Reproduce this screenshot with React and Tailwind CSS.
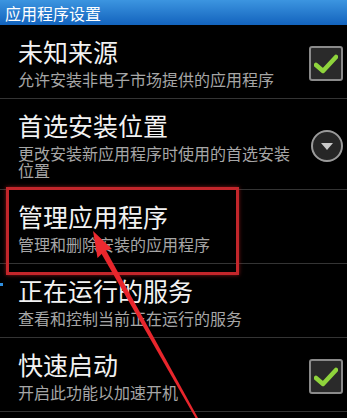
import React from 'react'

const CheckBox = () => (
  <div className="w-[34px] h-[35px] rounded-[3px] border-2 border-[#8a8a8a] bg-[#2a2a2a] flex items-center justify-center">
    <svg width="24" height="20" viewBox="0 0 24 20">
      <path d="M2 11 L9 17 L22 3" fill="none" stroke="#8fd43c" strokeWidth="4.5" strokeLinecap="round" strokeLinejoin="round" />
    </svg>
  </div>
)

const DropDown = () => (
  <div className="w-[32px] h-[32px] rounded-full border-2 border-[#9a9a9a] bg-[#262626] flex items-center justify-center">
    <svg width="14" height="10" viewBox="0 0 14 10">
      <path d="M1 2 L13 2 L7 9 Z" fill="#c8c8c8" />
    </svg>
  </div>
)

const settings = [
  { title: '未知来源', desc: '允许安装非电子市场提供的应用程序', control: 'check' },
  { title: '首选安装位置', desc: '更改安装新应用程序时使用的首选安装位置', control: 'drop' },
  { title: '管理应用程序', desc: '管理和删除安装的应用程序' },
  { title: '正在运行的服务', desc: '查看和控制当前正在运行的服务', mark: true },
  { title: '快速启动', desc: '开启此功能以加速开机', control: 'check' },
]

const Arrow = () => (
  <svg className="absolute left-0 top-0 pointer-events-none" width="347" height="418" viewBox="0 0 347 418">
    <polygon points="100.5,252 105.5,249.5 198,418 195.5,418" fill="#e8262c" />
    <polygon points="93,231 112,249 105,250.5 97.5,258" fill="#ec2a30" />
  </svg>
)

export default function App() {
  return (
    <div
      className="relative w-[347px] h-[418px] bg-black overflow-hidden"
      style={{ fontFamily: '"Noto Sans CJK SC", "Noto Sans", sans-serif' }}
    >
      <div className="h-[25px] bg-gradient-to-b from-[#3c95e0] to-[#1263bd] flex items-center pl-[5px]">
        <span className="text-[16px] leading-[16px] text-white">应用程序设置</span>
      </div>

      {settings.map((s, i) => (
        <div key={i} className="relative">
          <div className="flex items-center pl-[18px] pr-[4px] pt-[14px] pb-[10px]">
            <div className="w-[284px] flex flex-col">
              <div className="text-[25px] leading-[25px] text-[#f2f2f2]">{s.title}</div>
              <div className="mt-[7px] text-[16px] leading-[17px] text-[#a6a6a6]">{s.desc}</div>
            </div>
            <div className="ml-auto">
              {s.control === 'check' && <CheckBox />}
              {s.control === 'drop' && <DropDown />}
            </div>
          </div>
          <div className="h-px bg-[#343434]" />
          {s.mark && <div className="absolute left-0 top-[19px] w-[3px] h-[3px] bg-[#2f8fe0]" />}
        </div>
      ))}

      <div className="absolute left-[6px] top-[187px] w-[233px] h-[88px] border-[3px] border-[#c3262b] shadow-[0_0_4px_rgba(220,40,40,0.6)]" />
      <Arrow />
    </div>
  )
}
